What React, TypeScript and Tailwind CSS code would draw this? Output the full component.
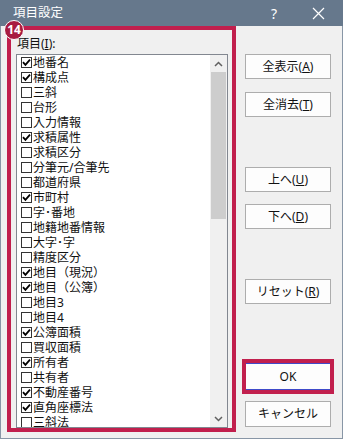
import React from 'react';

const items: { label: string; checked: boolean }[] = [
  { label: '地番名', checked: true },
  { label: '構成点', checked: true },
  { label: '三斜', checked: false },
  { label: '台形', checked: false },
  { label: '入力情報', checked: false },
  { label: '求積属性', checked: true },
  { label: '求積区分', checked: false },
  { label: '分筆元/合筆先', checked: false },
  { label: '都道府県', checked: false },
  { label: '市町村', checked: true },
  { label: '字･番地', checked: false },
  { label: '地籍地番情報', checked: false },
  { label: '大字･字', checked: false },
  { label: '精度区分', checked: false },
  { label: '地目（現況）', checked: true },
  { label: '地目（公簿）', checked: true },
  { label: '地目3', checked: false },
  { label: '地目4', checked: false },
  { label: '公簿面積', checked: true },
  { label: '買収面積', checked: false },
  { label: '所有者', checked: true },
  { label: '共有者', checked: false },
  { label: '不動産番号', checked: true },
  { label: '直角座標法', checked: true },
  { label: '三斜法', checked: false },
];

function CheckBox({ checked }: { checked: boolean }) {
  return (
    <span className="w-[11px] h-[11px] border border-[#333333] bg-white flex items-center justify-center shrink-0">
      {checked && (
        <svg width="9" height="9" viewBox="0 0 9 9">
          <path d="M1 4.2 L3.4 6.8 L8 1.6" fill="none" stroke="#000" strokeWidth="1.8" />
        </svg>
      )}
    </span>
  );
}

function Btn({ children, className = '' }: { children: React.ReactNode; className?: string }) {
  return (
    <div
      className={`mx-[3px] h-[25px] border border-[#adadad] bg-[#fdfdfd] flex items-center justify-center text-[12px] text-[#111] ${className}`}
    >
      {children}
    </div>
  );
}

export default function App() {
  return (
    <div
      className="relative w-[343px] h-[440px] bg-white"
      style={{ fontFamily: '"Noto Sans", "Noto Sans CJK JP", sans-serif' }}
    >
      {/* title bar */}
      <div className="h-[26px] bg-[#66788c] flex items-center pl-[13px] text-white text-[12.5px]">
        <span className="flex-1">項目設定</span>
        <span className="w-[8px] mr-[33px] text-[14px]">?</span>
        <svg width="13" height="13" viewBox="0 0 13 13" className="mr-[18px]">
          <path d="M1 1 L12 12 M12 1 L1 12" stroke="#fff" strokeWidth="1.2" />
        </svg>
      </div>

      {/* body */}
      <div className="h-[413px] bg-[#f0f0f0] border-l border-r border-b border-[#8896a6] flex">
        {/* list highlight box */}
        <div className="ml-[6px] w-[229px] h-[406px] border-4 border-[#c11f4d] flex flex-col pl-[5px] pr-[4px]">
          <div className="h-[24px] pt-[7px] pl-[1px] text-[12px] text-[#111] leading-[14px]">
            項目(<span className="underline">I</span>):
          </div>
          <div className="flex-1 border border-[#828790] bg-white flex overflow-hidden">
            <div className="flex-1 flex flex-col overflow-hidden">
              {items.map((it) => (
                <div key={it.label} className="h-[15px] shrink-0 flex items-center pl-[4px] gap-[1px] text-[12px] text-[#111] leading-[15px]">
                  <CheckBox checked={it.checked} />
                  <span className="leading-[14px]">{it.label}</span>
                </div>
              ))}
            </div>
            {/* scrollbar */}
            <div className="w-[17px] bg-[#f0f0f0] flex flex-col items-center">
              <div className="h-[17px] flex items-center justify-center">
                <svg width="9" height="6" viewBox="0 0 9 6">
                  <path d="M1 5 L4.5 1.5 L8 5" fill="none" stroke="#606060" strokeWidth="1.5" />
                </svg>
              </div>
              <div className="w-[15px] h-[147px] bg-[#cdcdcd]" />
              <div className="flex-1" />
              <div className="h-[17px] flex items-center justify-center">
                <svg width="9" height="6" viewBox="0 0 9 6">
                  <path d="M1 1 L4.5 4.5 L8 1" fill="none" stroke="#606060" strokeWidth="1.5" />
                </svg>
              </div>
            </div>
          </div>
        </div>

        {/* buttons */}
        <div className="ml-[6px] w-[92px] flex flex-col pt-[28px]">
          <Btn>
            全表示(<span className="underline">A</span>)
          </Btn>
          <Btn className="mt-[13px]">
            全消去(<span className="underline">T</span>)
          </Btn>
          <Btn className="mt-[50px]">
            上へ(<span className="underline">U</span>)
          </Btn>
          <Btn className="mt-[12px]">
            下へ(<span className="underline">D</span>)
          </Btn>
          <Btn className="mt-[50px]">
            リセット(<span className="underline">R</span>)
          </Btn>
          <div className="mt-[55px] h-[35px] border-4 border-[#c11f4d]">
            <div className="h-full border-y border-[#3f4ac9] bg-[#fdfdfd] flex items-center justify-center text-[12px] text-[#111]">
              OK
            </div>
          </div>
          <Btn className="mt-[7px] h-[26px]">キャンセル</Btn>
        </div>
      </div>

      {/* step badge */}
      <div className="absolute left-[4px] top-[20px] w-[20px] h-[20px] rounded-full bg-[#a81b40] border border-white flex items-center justify-center text-white text-[12px] font-bold leading-none">
        14
      </div>
    </div>
  );
}
